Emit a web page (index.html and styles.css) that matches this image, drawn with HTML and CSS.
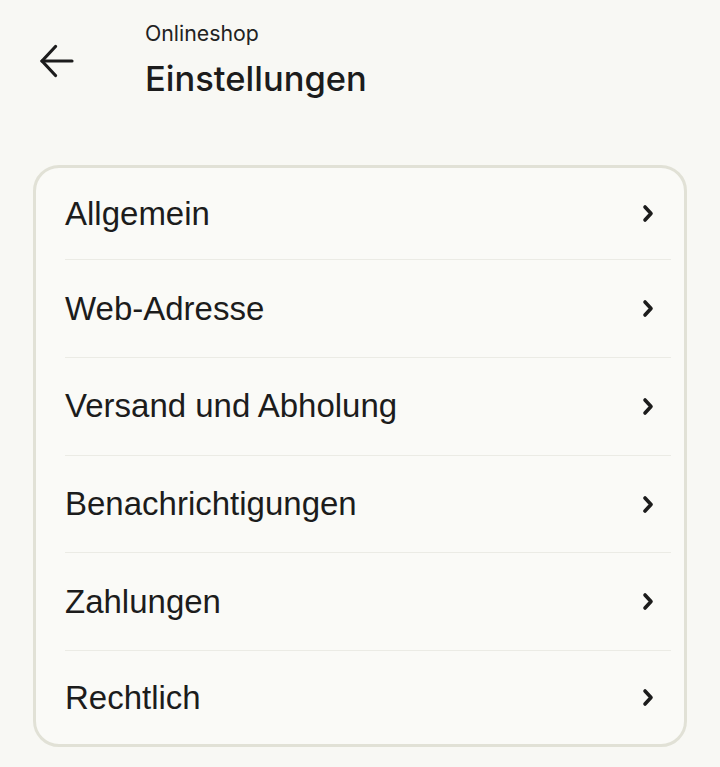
FILE: index.html
```html
<!DOCTYPE html>
<html lang="de">
<head>
<meta charset="utf-8">
<title>Einstellungen</title>
<link rel="stylesheet" href="styles.css">
</head>
<body>
<header class="topbar">
  <button class="back" aria-label="Zurück">
    <svg width="34" height="34" viewBox="0 0 34 34" fill="none" stroke="#1c1c1c" stroke-width="3.2" stroke-linecap="round" stroke-linejoin="round">
      <path d="M2 17 H32"/>
      <path d="M15.5 2.5 L2 17 L15.5 31.5"/>
    </svg>
  </button>
  <div class="titles">
    <div class="eyebrow">Onlineshop</div>
    <h1 class="title">Einstellungen</h1>
  </div>
</header>
<main class="content">
  <ul class="card">
    <li class="row"><span class="label">Allgemein</span><svg class="chev" width="12" height="19" viewBox="0 0 12 19" fill="none" stroke="#1c1c1c" stroke-width="3.6" stroke-linecap="round" stroke-linejoin="round"><path d="M3 3 L9 9.5 L3 16"/></svg></li>
    <li class="row"><span class="label">Web-Adresse</span><svg class="chev" width="12" height="19" viewBox="0 0 12 19" fill="none" stroke="#1c1c1c" stroke-width="3.6" stroke-linecap="round" stroke-linejoin="round"><path d="M3 3 L9 9.5 L3 16"/></svg></li>
    <li class="row"><span class="label">Versand und Abholung</span><svg class="chev" width="12" height="19" viewBox="0 0 12 19" fill="none" stroke="#1c1c1c" stroke-width="3.6" stroke-linecap="round" stroke-linejoin="round"><path d="M3 3 L9 9.5 L3 16"/></svg></li>
    <li class="row"><span class="label">Benachrichtigungen</span><svg class="chev" width="12" height="19" viewBox="0 0 12 19" fill="none" stroke="#1c1c1c" stroke-width="3.6" stroke-linecap="round" stroke-linejoin="round"><path d="M3 3 L9 9.5 L3 16"/></svg></li>
    <li class="row"><span class="label">Zahlungen</span><svg class="chev" width="12" height="19" viewBox="0 0 12 19" fill="none" stroke="#1c1c1c" stroke-width="3.6" stroke-linecap="round" stroke-linejoin="round"><path d="M3 3 L9 9.5 L3 16"/></svg></li>
    <li class="row"><span class="label">Rechtlich</span><svg class="chev" width="12" height="19" viewBox="0 0 12 19" fill="none" stroke="#1c1c1c" stroke-width="3.6" stroke-linecap="round" stroke-linejoin="round"><path d="M3 3 L9 9.5 L3 16"/></svg></li>
  </ul>
</main>
</body>
</html>
```

FILE: styles.css
```css
* { box-sizing: border-box; }

html, body {
  margin: 0;
  padding: 0;
  background: #f8f8f4;
  color: #1c1c1c;
  font-family: "Liberation Sans", Arial, sans-serif;
}

.topbar {
  display: flex;
  align-items: flex-start;
  padding: 20px 0 0 40px;
  height: 165px;
}

.back {
  width: 34px;
  height: 34px;
  margin-top: 24px;
  padding: 0;
  border: 0;
  background: transparent;
  display: flex;
}

.titles {
  margin-left: 71px;
  display: flex;
  flex-direction: column;
}

.eyebrow {
  font-family: "Inter", "Liberation Sans", sans-serif;
  font-size: 21.3px;
  line-height: 26px;
  color: #222;
}

.title {
  margin: 13px 0 0;
  font-family: "Inter", "Liberation Sans", sans-serif;
  font-weight: 500;
  font-size: 34.5px;
  line-height: 40px;
  letter-spacing: 0;
}

.content {
  padding: 0 33px;
}

.card {
  list-style: none;
  margin: 0;
  padding: 0;
  background: #fafaf7;
  border: 3px solid #e1e1d6;
  border-radius: 26px;
}

.row {
  display: flex;
  align-items: center;
  justify-content: space-between;
  height: 97.7px;
  margin: 0 13px 0 29px;
  padding-right: 17px;
  border-top: 1px solid #ebebe5;
  font-size: 33px;
}

.row:first-child {
  border-top: 0;
  height: 91.3px;
}

.row:last-child {
  height: 94px;
}

.label {
  line-height: 40px;
}

.chev {
  flex: none;
}
```
